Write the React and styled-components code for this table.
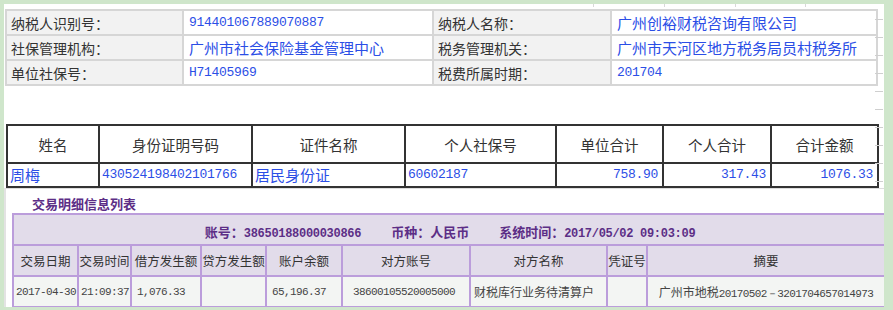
import React from 'react';
import styled, { createGlobalStyle } from 'styled-components';

const Global = createGlobalStyle`
  html, body { margin: 0; padding: 0; background: #cfe6cb; }
  body {
    width: 893px; height: 310px; overflow: hidden;
    font-family: "Noto Sans CJK SC", "Liberation Sans", sans-serif;
  }
`;

const CJK = '"Noto Sans CJK SC", "Liberation Sans", sans-serif';
const MONO = '"Liberation Mono", "DejaVu Sans Mono", monospace';

const Page = styled.div`
  width: 893px;
  height: 310px;
  padding: 4px 9px 0 4px;
  box-sizing: border-box;
  display: flex;
  flex-direction: column;
`;

const Sheet = styled.section`
  width: 880px;
  height: 184px;
  background: #fff;
  display: flex;
`;

const Main = styled.div`
  width: 872px;
  display: flex;
  flex-direction: column;
`;

/* faint row guides along the right edge of the sheet */
const Ruler = styled.div`
  width: 8px;
  margin-left: -1px;
  padding-top: 15px;
  display: flex;
  flex-direction: column;
  gap: 17px;
`;

const RulerMark = styled.span`
  height: 1px;
  background: #cfcfcf;
`;

const TopStrip = styled.div`
  height: 5px;
  display: flex;
  padding-left: 589px;
`;

const Tick = styled.span`
  width: 91px;
  height: 3px;
  border-left: 1px solid #d8d8d8;
  box-sizing: border-box;
`;

/* taxpayer info grid */
const InfoTable = styled.table`
  border-collapse: collapse;
  table-layout: fixed;
  width: 871px;
  margin-left: 1px;
  border: 2px solid #d6d6d6;
`;

const InfoRow = styled.tr`
  height: 25px;
`;

const Label = styled.td`
  background: #f2f2f2;
  color: #333;
  font-family: ${CJK};
  font-size: 14px;
  line-height: 16px;
  padding: 0 0 0 4px;
  border: 2px solid #d6d6d6;
  white-space: nowrap;
`;

const Value = styled.td`
  background: #fff;
  color: #2b4ee6;
  font-family: ${p => (p.$num ? MONO : CJK)};
  font-size: ${p => (p.$num ? '13px' : '15px')};
  letter-spacing: ${p => (p.$num ? '-0.3px' : '0')};
  line-height: 16px;
  padding: 0 0 0 5px;
  border: 2px solid #d6d6d6;
  white-space: nowrap;
  overflow: hidden;
`;

/* payer summary table */
const PersonTable = styled.table`
  border-collapse: collapse;
  table-layout: fixed;
  width: 871px;
  margin: 38px 0 0 2px;
  border: 2px solid #333;
`;

const HeadCell = styled.th`
  height: 36px;
  border: 2px solid #333;
  font-family: ${CJK};
  font-weight: normal;
  font-size: 14.5px;
  color: #333;
  text-align: center;
  padding: 0;
`;

const DataCell = styled.td`
  height: 22px;
  border: 2px solid #333;
  color: #2b4ee6;
  font-family: ${p => (p.$num ? MONO : CJK)};
  font-size: ${p => (p.$num ? '13px' : '15px')};
  letter-spacing: ${p => (p.$num ? '-0.3px' : '0')};
  line-height: 18px;
  text-align: ${p => (p.$right ? 'right' : 'left')};
  padding: ${p => (p.$right ? '0 4px 0 0' : '0 0 0 2px')};
  white-space: nowrap;
  overflow: hidden;
`;

/* transaction detail panel */
const Panel = styled.section`
  width: 880px;
  box-sizing: border-box;
  background: #fff;
  height: 119px;
  overflow: hidden;
  border-top: 1px solid #dddddd;
  border-left: 2px solid #e3e3e3;
  display: flex;
  flex-direction: column;
`;

const TabEdge = styled.div`
  width: 69px;
  height: 3px;
  margin-left: 407px;
  background: #e3dcea;
  border-radius: 0 0 4px 4px;
`;

const Title = styled.h3`
  margin: 0;
  padding: 6px 0 0 26px;
  height: 18px;
  line-height: 18px;
  font-family: ${CJK};
  font-size: 13px;
  font-weight: bold;
  color: #5c2e86;
`;

const TxTable = styled.table`
  border-collapse: collapse;
  table-layout: fixed;
  width: 872px;
  max-width: 872px;
  margin-left: 6px;
  border: 2px solid #bb9ddb;
`;

const AccountCell = styled.td`
  height: 29px;
  background: #e2dcea;
  border: 2px solid #bb9ddb;
  text-align: center;
  padding: 0 0 0 2px;
  white-space: nowrap;
  overflow: hidden;
`;

const AccountItem = styled.span`
  display: inline-block;
  margin-left: ${p => (p.$first ? '0' : '30px')};
  font-family: ${CJK};
  font-size: 13px;
  font-weight: bold;
  color: #5c2e86;
`;

const AccountNum = styled.span`
  font-family: ${MONO};
  font-size: 12px;
  letter-spacing: -0.3px;
  font-weight: bold;
`;

const TxHead = styled.th`
  height: 29px;
  background: #e2dcea;
  border: 2px solid #bb9ddb;
  font-family: ${CJK};
  font-weight: normal;
  font-size: 12.5px;
  color: #333;
  text-align: center;
  padding: 0;
  white-space: nowrap;
  overflow: hidden;
`;

const TxCell = styled.td`
  height: 29px;
  background: #f3f5f3;
  border: 2px solid #bb9ddb;
  color: #444;
  font-family: ${p => (p.$num ? MONO : CJK)};
  font-size: ${p => (p.$num ? '11px' : '12px')};
  letter-spacing: ${p => (p.$num ? '-0.6px' : '0')};
  text-align: ${p => p.$align || 'left'};
  padding: 0 0 0 ${p => p.$pad ?? 4}px;
  white-space: nowrap;
  overflow: hidden;
`;

const Mono = styled.span`
  font-family: ${MONO};
  font-size: 11px;
  letter-spacing: -0.6px;
`;

const infoRows = [
  ['纳税人识别号：', '914401067889070887', true, '纳税人名称：', '广州创裕财税咨询有限公司', false],
  ['社保管理机构：', '广州市社会保险基金管理中心', false, '税务管理机关：', '广州市天河区地方税务局员村税务所', false],
  ['单位社保号：', 'H71405969', true, '税费所属时期：', '201704', true],
];

const personCols = [92, 153, 153, 151, 107, 108, 107];
const personHeads = ['姓名', '身份证明号码', '证件名称', '个人社保号', '单位合计', '个人合计', '合计金额'];

const txCols = [65, 53, 70, 65, 76, 128, 137, 40, 238];
const txHeads = ['交易日期', '交易时间', '借方发生额', '贷方发生额', '账户余额', '对方账号', '对方名称', '凭证号', '摘要'];

export default function App() {
  return (
    <>
      <Global />
      <Page>
        <Sheet>
          <Main>
            <TopStrip>
              <Tick /><Tick /><Tick /><Tick />
            </TopStrip>
            <InfoTable>
              <colgroup>
                <col style={{ width: 177 }} />
                <col style={{ width: 250 }} />
                <col style={{ width: 178 }} />
                <col style={{ width: 266 }} />
              </colgroup>
              <tbody>
                {infoRows.map(([l1, v1, n1, l2, v2, n2]) => (
                  <InfoRow key={l1}>
                    <Label>{l1}</Label>
                    <Value $num={n1}>{v1}</Value>
                    <Label>{l2}</Label>
                    <Value $num={n2}>{v2}</Value>
                  </InfoRow>
                ))}
              </tbody>
            </InfoTable>

            <PersonTable>
              <colgroup>
                {personCols.map((w, i) => <col key={i} style={{ width: w }} />)}
              </colgroup>
              <thead>
                <tr>
                  {personHeads.map(h => <HeadCell key={h}>{h}</HeadCell>)}
                </tr>
              </thead>
              <tbody>
                <tr>
                  <DataCell>周梅</DataCell>
                  <DataCell $num>430524198402101766</DataCell>
                  <DataCell>居民身份证</DataCell>
                  <DataCell $num>60602187</DataCell>
                  <DataCell $num $right>758.90</DataCell>
                  <DataCell $num $right>317.43</DataCell>
                  <DataCell $num $right>1076.33</DataCell>
                </tr>
              </tbody>
            </PersonTable>
          </Main>
          <Ruler>
            {Array.from({ length: 10 }, (_, i) => <RulerMark key={i} />)}
          </Ruler>
        </Sheet>

        <Panel>
          <TabEdge />
          <Title>交易明细信息列表</Title>
          <TxTable>
            <colgroup>
              {txCols.map((w, i) => <col key={i} style={{ width: w }} />)}
            </colgroup>
            <tbody>
              <tr>
                <AccountCell colSpan={9}>
                  <AccountItem $first>账号：<AccountNum>38650188000030866</AccountNum></AccountItem>
                  <AccountItem>币种：人民币</AccountItem>
                  <AccountItem>系统时间：<AccountNum>2017/05/02 09:03:09</AccountNum></AccountItem>
                </AccountCell>
              </tr>
              <tr>
                {txHeads.map(h => <TxHead key={h}>{h}</TxHead>)}
              </tr>
              <tr>
                <TxCell $num $pad={2}>2017-04-30</TxCell>
                <TxCell $num $pad={2}>21:09:37</TxCell>
                <TxCell $num $pad={5}>1,076.33</TxCell>
                <TxCell />
                <TxCell $num $pad={5}>65,196.37</TxCell>
                <TxCell $num $pad={10}>38600105520005000</TxCell>
                <TxCell $pad={3}>财税库行业务待清算户</TxCell>
                <TxCell />
                <TxCell $align="center" $pad={0}>广州市地税<Mono>20170502－3201704657014973</Mono></TxCell>
              </tr>
            </tbody>
          </TxTable>
        </Panel>
      </Page>
    </>
  );
}
